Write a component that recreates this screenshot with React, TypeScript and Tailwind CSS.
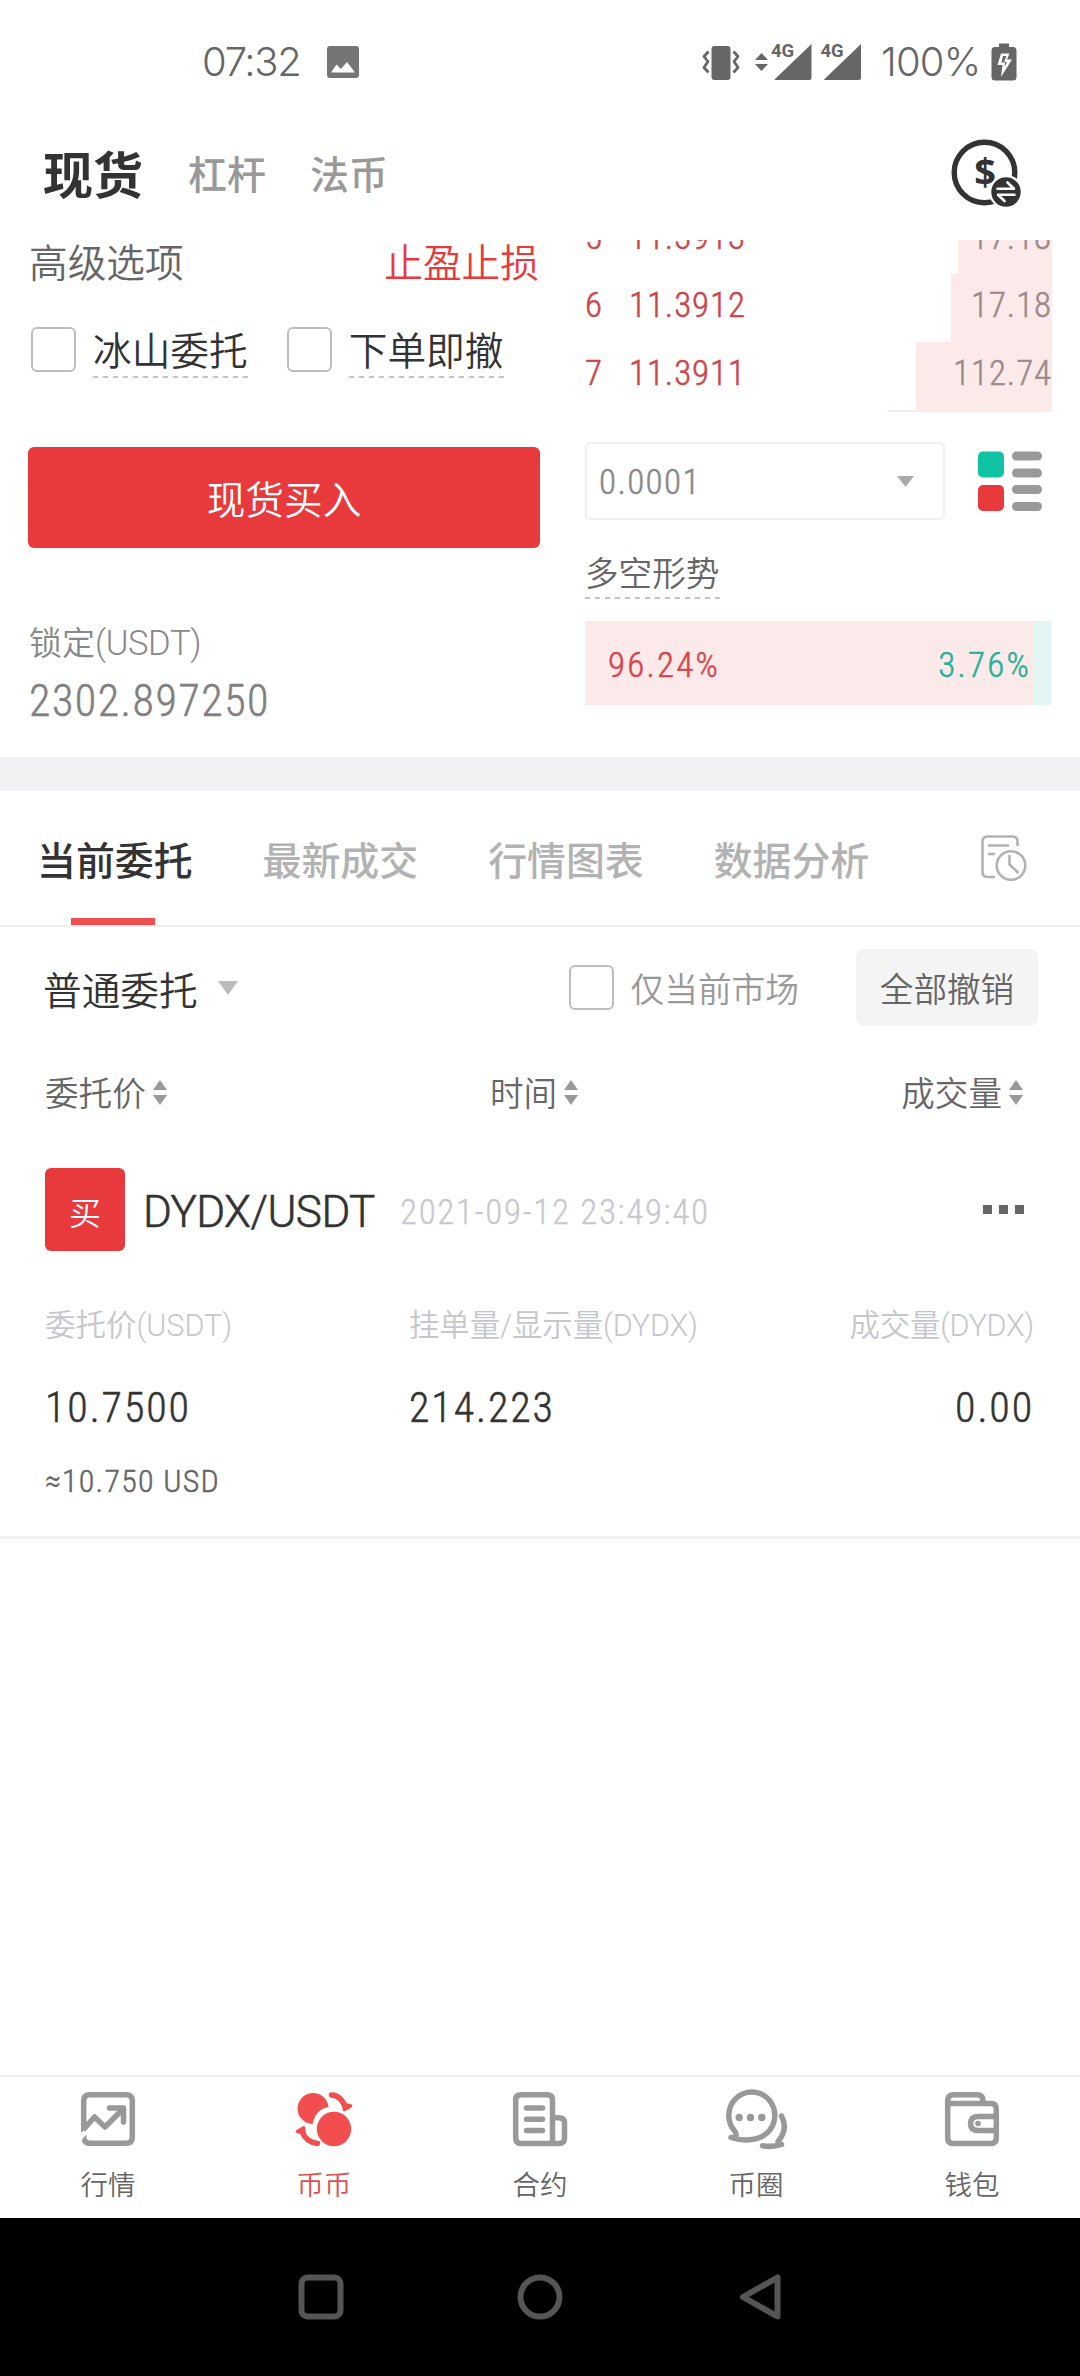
import React from "react";

const CJK = "font-['Noto_Sans_CJK_SC',sans-serif] font-[350]";
const DIN = "font-[Roboto,'Noto_Sans_CJK_SC',sans-serif] font-light [font-stretch:75%] [-webkit-text-stroke:0.5px]";

const dash = "h-[2px] bg-[repeating-linear-gradient(90deg,#c4c4c4_0_5px,transparent_5px_10px)]";

function StatusBar() {
  return (
    <div className="flex h-[106px] items-center pt-[17px] pl-[202px] pr-[63px] text-[#666]">
      <span className="w-[98px] font-[Inter,sans-serif] text-[40px] font-light tracking-[-1.3px] whitespace-nowrap">07:32</span>
      <svg className="ml-[27px]" width="32" height="32" viewBox="0 0 32 32">
        <rect width="32" height="32" rx="3" fill="#757575" />
        <path d="M4 26.5 L9.5 18.5 L14 23 L20 16 L28 26.5 Z" fill="#fff" />
      </svg>
      <svg className="ml-auto overflow-visible" width="110" height="38" viewBox="0 0 110 38" fill="#666">
        <rect x="9.500" y="3" width="19" height="34" rx="3" />
        <path d="M6.500 8.500 L2 13.500 L6 18.500 L2 24.500 L6.500 29.500 M31.500 8.500 L36 13.500 L32 18.500 L36 24.500 L31.500 29.500" fill="none" stroke="#666" strokeWidth="2.800" strokeLinejoin="round" />
        <path d="M53 17 L59.500 10 L66 17 Z M53 21 L59.500 28 L66 21 Z" />
        <path d="M109.500 1 V35 Q109.500 37 107.500 37 H73 Q72 37 73 36 Z" />
        <text x="69" y="14" fontFamily="Roboto" fontWeight="700" fontSize="18.500">4G</text>
      </svg>
      <svg className="ml-[8px] overflow-visible" width="42" height="38" viewBox="0 0 42 38" fill="#666">
        <path d="M41 1 V35 Q41 37 39 37 H4.500 Q3.500 37 4.500 36 Z" />
        <text x="0.500" y="14" fontFamily="Roboto" fontWeight="700" fontSize="18.500">4G</text>
      </svg>
      <span className="ml-[19px] w-[98px] font-[Inter,sans-serif] text-[40px] font-light tracking-[-0.8px] whitespace-nowrap">100%</span>
      <svg className="ml-[12px]" width="26" height="38" viewBox="0 0 26 38">
        <path d="M8 0.500 H18 V4 H22 Q25.500 4 25.500 7.500 V34 Q25.500 37.500 22 37.500 H4 Q0.500 37.500 0.500 34 V7.500 Q0.500 4 4 4 H8 Z" fill="#666" />
        <path d="M10 10.500 H18.500 L16 16.500 H21 L10 34 L11.500 22 H6.500 Z" fill="#fff" />
        <path d="M12 13 H15.500 L13 19 H16 L13.500 24 L14 19.500 H10.500 Z" fill="#666" />
      </svg>
    </div>
  );
}

function Header() {
  return (
    <div className="flex h-[134px] items-center pr-[58px] pl-[43px]">
      <div className="-mt-[3px] flex items-center">
        <span className="text-[50px] leading-[76px] font-bold text-[#333]">现货</span>
        <span className="ml-[45px] text-[39px] leading-[60px] font-medium text-[#999]">杠杆</span>
        <span className="ml-[44px] text-[39px] leading-[60px] font-medium text-[#999]">法币</span>
      </div>
      <svg className="ml-auto" width="71" height="68" viewBox="0 0 71 68">
        <circle cx="33.500" cy="33.500" r="30.300" fill="none" stroke="#333" strokeWidth="5.400" />
        <text x="34" y="46.500" textAnchor="middle" fontFamily="Open Sans" fontWeight="700" fontSize="38" fill="#333">$</text>
        <circle cx="55" cy="53" r="17" fill="#fff" />
        <circle cx="55" cy="53" r="14.700" fill="#333" />
        <path d="M46.500 49.800 H63 L56.500 43.500 M63.500 55.700 H47 L53.500 62" fill="none" stroke="#fff" strokeWidth="2.600" strokeLinejoin="round" strokeLinecap="round" />
      </svg>
    </div>
  );
}

function Check({ label }: { label: string }) {
  return (
    <div className="flex">
      <div className="mt-[3px] size-[45px] rounded-[6px] border-[2.5px] border-[#bdbdbd]" />
      <div className="ml-[17px]">
        <div className="mb-[4px] text-[38.700px] leading-[48px] text-[#333]">{label}</div>
        <div className={dash} />
      </div>
    </div>
  );
}

const asks = [
  { n: "5", price: "11.3913", qty: "17.18", w: 94 },
  { n: "6", price: "11.3912", qty: "17.18", w: 101 },
  { n: "7", price: "11.3911", qty: "112.74", w: 136 },
  { n: "", price: "", qty: "", w: 164 },
];

function TradePanel() {
  return (
    <div className="flex h-[517px] justify-between overflow-hidden pr-[28px] pl-[28px]">
      <div className="w-[512px]">
        <div className="flex h-[43px] items-center justify-between pr-px pl-px text-[38.700px] leading-[40px]">
          <span className="-mt-[3px] text-[#666]">高级选项</span>
          <span className="-mt-[3px] text-[#e8393d]">止盈止损</span>
        </div>
        <div className="mt-[41px] flex gap-[39px] pl-[3px]">
          <Check label="冰山委托" />
          <Check label="下单即撤" />
        </div>
        <div className="mt-[69px] flex h-[101px] items-center justify-center rounded-[6px] bg-[#e8393c] pb-px text-[38.700px] text-white">现货买入</div>
        <div className="mt-[71px] ml-px text-[33px] leading-[44px] text-[#888]">
          锁定<span className="font-[Roboto] text-[34.500px] tracking-[-0.01em]">(USDT)</span>
        </div>
        <div className={`mt-[10px] ml-px text-[44px] leading-[52px] tracking-[0.034em] text-[#808080] ${DIN}`}>2302.897250</div>
      </div>
      <div className={`w-[467px] ${DIN}`}>
        <div className="h-[172px] overflow-hidden">
          <div className="-mt-[34px]">
            {asks.map((a, i) => (
              <div key={i} className="flex h-[68px] text-[35px] leading-[63px] tracking-[0.026em]">
                <span className="w-[44px] text-[#cf4347]">{a.n}</span>
                <span className="text-[#cf4347]">{a.price}</span>
                <div className="ml-auto h-[68px] bg-[#fceaea] text-right text-[#9b8b8b]" style={{ width: a.w }}>{a.qty}</div>
              </div>
            ))}
          </div>
        </div>
        <div className="mt-[30px] flex items-center">
          <div className="flex h-[78px] w-[360px] items-center justify-between rounded-[5px] border-[2.5px] border-[#f0f0f0] pr-[29px] pl-[12px] text-[35px] text-[#888]">
            <span className="pt-[4px] tracking-[0.04em]">0.0001</span>
            <svg width="17" height="11" viewBox="0 0 17 11"><path d="M0 0 H17 L8.500 11 Z" fill="#aaa" /></svg>
          </div>
          <svg className="ml-[33px]" width="64" height="60" viewBox="0 0 64 60">
            <rect y="0.500" width="26" height="26" rx="5" fill="#10c3a3" />
            <rect y="34" width="26" height="26" rx="5" fill="#e8393c" />
            <g fill="#999">
              <rect x="34" y="0.500" width="30" height="9" rx="4.500" />
              <rect x="34" y="17.500" width="30" height="9" rx="4.500" />
              <rect x="34" y="34" width="30" height="9" rx="4.500" />
              <rect x="34" y="51" width="30" height="9" rx="4.500" />
            </g>
          </svg>
        </div>
        <div className="mt-[30px] w-[135px]">
          <div className="mb-[3px] font-['Noto_Sans_CJK_SC'] text-[33.600px] leading-[44px] font-[350] text-[#666] [-webkit-text-stroke:0px]">多空形势</div>
          <div className={dash} />
        </div>
        <div className="mt-[22px] flex h-[84px] w-[466px] items-center justify-between bg-[linear-gradient(90deg,#fceaea_96.24%,#e2f6f3_96.24%)] pt-[5px] pr-[20px] pl-[23px] text-[35px] leading-[40px] tracking-[0.063em]">
          <span className="text-[#d6434a]">96.24%</span>
          <span className="text-[#26b196]">3.76%</span>
        </div>
      </div>
    </div>
  );
}

function Tabs() {
  return (
    <div className="border-b-2 border-[#eee]">
      <div className="flex h-[127px] items-center pt-[7px] pr-[53px] pl-[37px] text-[38.900px] leading-[44px] font-medium text-[#b2b2b2]">
        <span className="text-[#333]">当前委托</span>
        <span className="ml-[70px]">最新成交</span>
        <span className="ml-[70px]">行情图表</span>
        <span className="ml-[70px]">数据分析</span>
        <svg className="ml-auto" width="46" height="46" viewBox="0 0 46 46" fill="none" stroke="#b2b2b2" strokeWidth="2.600">
          <path d="M36.500 11 V6.500 Q36.500 1.500 31.500 1.500 H6.500 Q1.500 1.500 1.500 6.500 V37 Q1.500 42 6.500 42 H14 M7 10.500 H28 M7 19 H14" />
          <circle cx="30" cy="30.500" r="14.300" />
          <path d="M28.500 20 V29.500 L37.500 38" />
        </svg>
      </div>
      <div className="ml-[71px] h-[7px] w-[84px] bg-[#f04e50]" />
    </div>
  );
}

function Sort() {
  return (
    <svg width="14" height="25" viewBox="0 0 14 25" fill="#999">
      <path d="M7 0 L14 10 H0 Z M7 25 L14 15 H0 Z" />
    </svg>
  );
}

function Orders() {
  return (
    <div className="h-[612px] border-b-[3px] border-[#f1f1f1]">
      <div className="mt-[22px] flex h-[77px] items-center pr-[42px] pl-[43px]">
        <span className="text-[38.700px] leading-[44px] text-[#333]">普通委托</span>
        <svg className="ml-[20px]" width="20" height="14" viewBox="0 0 20 14"><path d="M0 0 H20 L10 14 Z" fill="#bbb" /></svg>
        <div className="ml-auto size-[45px] rounded-[6px] border-[2.5px] border-[#bdbdbd]" />
        <span className="ml-[17px] text-[33.700px] leading-[44px] text-[#999]">仅当前市场</span>
        <div className="ml-[57px] flex h-[77px] w-[182px] items-center justify-center rounded-[8px] bg-[#f4f4f4] text-[33.600px] leading-[44px] text-[#666]">全部撤销</div>
      </div>
      <div className="mt-[44px] flex h-[44px] items-center justify-between pr-[57px] pl-[45px] text-[33.600px] leading-[44px] text-[#666]">
        <div className="flex items-center gap-[7px]">委托价<Sort /></div>
        <div className="flex items-center gap-[7px]">时间<Sort /></div>
        <div className="flex items-center gap-[7px]">成交量<Sort /></div>
      </div>
      <div className="mt-[54px] flex h-[83px] items-center pr-[56px] pl-[45px]">
        <div className="flex h-[83px] w-[80px] items-center justify-center rounded-[6px] bg-[#e8393c] pt-[2px] text-[32px] leading-[40px] text-white">买</div>
        <span className="ml-[18px] w-[234px] pt-[5px] font-[Roboto] text-[44px] leading-[52px] font-light tracking-[-0.012em] whitespace-nowrap text-[#333] [-webkit-text-stroke:0.6px]">DYDX/USDT</span>
        <span className="ml-[23px] pt-[6px] font-[Roboto] text-[35px] leading-[44px] tracking-[0.047em] whitespace-nowrap text-[#c6c8ce] [font-stretch:75%] [-webkit-text-stroke:0.3px]">2021-09-12 23:49:40</span>
        <div className="ml-auto flex gap-[7px]">
          <i className="size-[9px] bg-[#666]" />
          <i className="size-[9px] bg-[#666]" />
          <i className="size-[9px] bg-[#666]" />
        </div>
      </div>
      <div className="mt-[53px] grid grid-cols-[364px_1fr_auto] pr-[46px] pl-[45px]">
        <span className="font-[Roboto,'Noto_Sans_CJK_SC'] text-[30.500px] leading-[44px] text-[#c4c7cd]">委托价(USDT)</span>
        <span className="font-[Roboto,'Noto_Sans_CJK_SC'] text-[30.500px] leading-[44px] tracking-[-0.005em] text-[#c4c7cd]">挂单量/显示量(DYDX)</span>
        <span className="text-right font-[Roboto,'Noto_Sans_CJK_SC'] text-[30.500px] leading-[44px] tracking-[-0.01em] text-[#c4c7cd]">成交量(DYDX)</span>
        <span className={`mt-[35px] text-[42px] leading-[50px] tracking-[0.045em] text-[#333] ${DIN}`}>10.7500</span>
        <span className={`mt-[35px] text-[42px] leading-[50px] tracking-[0.045em] text-[#333] ${DIN}`}>214.223</span>
        <span className={`mt-[35px] text-right text-[42px] leading-[50px] tracking-[0.045em] text-[#333] ${DIN}`}>0.00</span>
        <span className={`mt-[26px] text-[32px] leading-[44px] tracking-[0.038em] text-[#666] ${DIN}`}>≈10.750 USD</span>
      </div>
    </div>
  );
}

const icons = {
  market: (
    <g fill="none" stroke="#999" strokeWidth="5.500" strokeLinejoin="round">
      <path d="M2.700 35 V8.700 Q2.700 2.700 8.700 2.700 H45 Q51.300 2.700 51.300 8.700 V45.500 Q51.300 51.300 45 51.300 H8.700 Q4.500 51.300 3.200 47.500" />
      <path d="M2 38 L13.500 25 L24 35 L42 17" />
      <path d="M28.500 16 H42.500 V30" strokeLinecap="round" />
      <path d="M0 32 H5.500 L5 36 L0 41 Z M0.500 47.500 L5.500 42.500 V48.500 Z" fill="#999" stroke="none" />
    </g>
  ),
  coin: (
    <g fill="#f24e50">
      <path d="M16.500 32 A15.500 15.500 0 1 1 32.500 15 Q20 17 16.500 32 Z" />
      <circle cx="38" cy="37" r="17.200" />
      <path d="M35.500 3 Q45 3.500 49.500 15.500 M21.500 51.500 Q10 50 6 39.500" fill="none" stroke="#f24e50" strokeWidth="5.500" strokeLinecap="round" />
      <path d="M48.500 17.500 L54.500 14 L48 12.500 Z M1.500 39.500 L7.500 36 L8 41 Z" stroke="#f24e50" strokeWidth="3.600" strokeLinejoin="round" />
    </g>
  ),
  contract: (
    <g fill="none" stroke="#999" strokeWidth="5.500">
      <path d="M39.500 51.500 H8 Q2.700 51.500 2.700 46 V8 Q2.700 2.700 8 2.700 H34 Q39.500 2.700 39.500 8 V51.500 H46 Q51.500 51.500 51.500 46 V31 Q51.500 25.700 46 25.700 H40" />
      <path d="M13.500 16 H29.500 M13.500 27.200 H29.500 M13.500 38.500 H29.500" strokeLinecap="round" />
    </g>
  ),
  circle: (
    <g fill="none" stroke="#999" strokeWidth="5.500" strokeLinecap="round" strokeLinejoin="round">
      <path d="M6 45.500 C11.500 45.500 12 42.500 10 39.500 A23 23.500 0 1 1 41.500 41.500 C32 49.500 17 49 6 45.500 Z" />
      <path d="M56.500 24 C61.500 33.500 60 41.500 53 49.500 Q53 52 56.500 52.500 Q47 55.500 37.500 53.700" />
      <g fill="#999" stroke="none">
        <circle cx="14.200" cy="25.500" r="3.700" /><circle cx="25.500" cy="25.500" r="3.700" /><circle cx="36.800" cy="25.500" r="3.700" />
      </g>
    </g>
  ),
  wallet: (
    <g fill="none" stroke="#999" strokeWidth="5.500">
      <path d="M2.700 11.500 V46 Q2.700 51.500 8.200 51.500 H45.800 Q51.300 51.500 51.300 46 V17 Q51.300 11.500 45.800 11.500 Z" />
      <path d="M2.700 14 V8.700 Q2.700 2.700 8.700 2.700 H32 Q38 2.700 38 8.700 V11.500" />
      <path d="M51.300 24.500 H33.500 Q25.500 24.500 25.500 31.500 Q25.500 38.500 33.500 38.500 H51.300" />
      <circle cx="33" cy="31.500" r="2.800" fill="#999" stroke="none" />
    </g>
  ),
};

function BottomNav() {
  const items = [
    { t: "行情", i: icons.market, w: 54 },
    { t: "币币", i: icons.coin, w: 56 },
    { t: "合约", i: icons.contract, w: 54 },
    { t: "币圈", i: icons.circle, w: 62 },
    { t: "钱包", i: icons.wallet, w: 54 },
  ];
  return (
    <div className="mt-auto grid h-[143px] grid-cols-5 border-t-2 border-[#eee]">
      {items.map((m, k) => (
        <div key={m.t} className="flex flex-col items-center pt-[15px]">
          <svg width={m.w} height="56" viewBox={`0 0 ${m.w} 56`} className="overflow-visible">{m.i}</svg>
          <span className={k === 1 ? "mt-[15px] text-[27.500px] leading-[40px] text-[#e04e50]" : "mt-[15px] text-[27.500px] leading-[40px] text-[#666]"}>{m.t}</span>
        </div>
      ))}
    </div>
  );
}

export default function App() {
  return (
    <div className={`flex h-[2376px] w-[1080px] flex-col bg-white ${CJK}`}>
      <StatusBar />
      <Header />
      <TradePanel />
      <div className="h-[34px] shrink-0 bg-[#f0f2f4]" />
      <Tabs />
      <Orders />
      <BottomNav />
      <div className="flex h-[158px] shrink-0 items-center bg-black pl-[298px]">
        <svg width="46" height="46" viewBox="0 0 46 46"><rect x="3.500" y="3.500" width="39" height="39" rx="6" fill="none" stroke="#555" strokeWidth="6" /></svg>
        <svg className="ml-[173px]" width="46" height="46" viewBox="0 0 46 46"><circle cx="23" cy="23" r="19.500" fill="none" stroke="#555" strokeWidth="6" /></svg>
        <svg className="ml-[176px]" width="44" height="46" viewBox="0 0 44 46"><path d="M38.500 3.500 V42.500 L4 23 Z" fill="none" stroke="#555" strokeWidth="6" strokeLinejoin="round" /></svg>
      </div>
    </div>
  );
}
